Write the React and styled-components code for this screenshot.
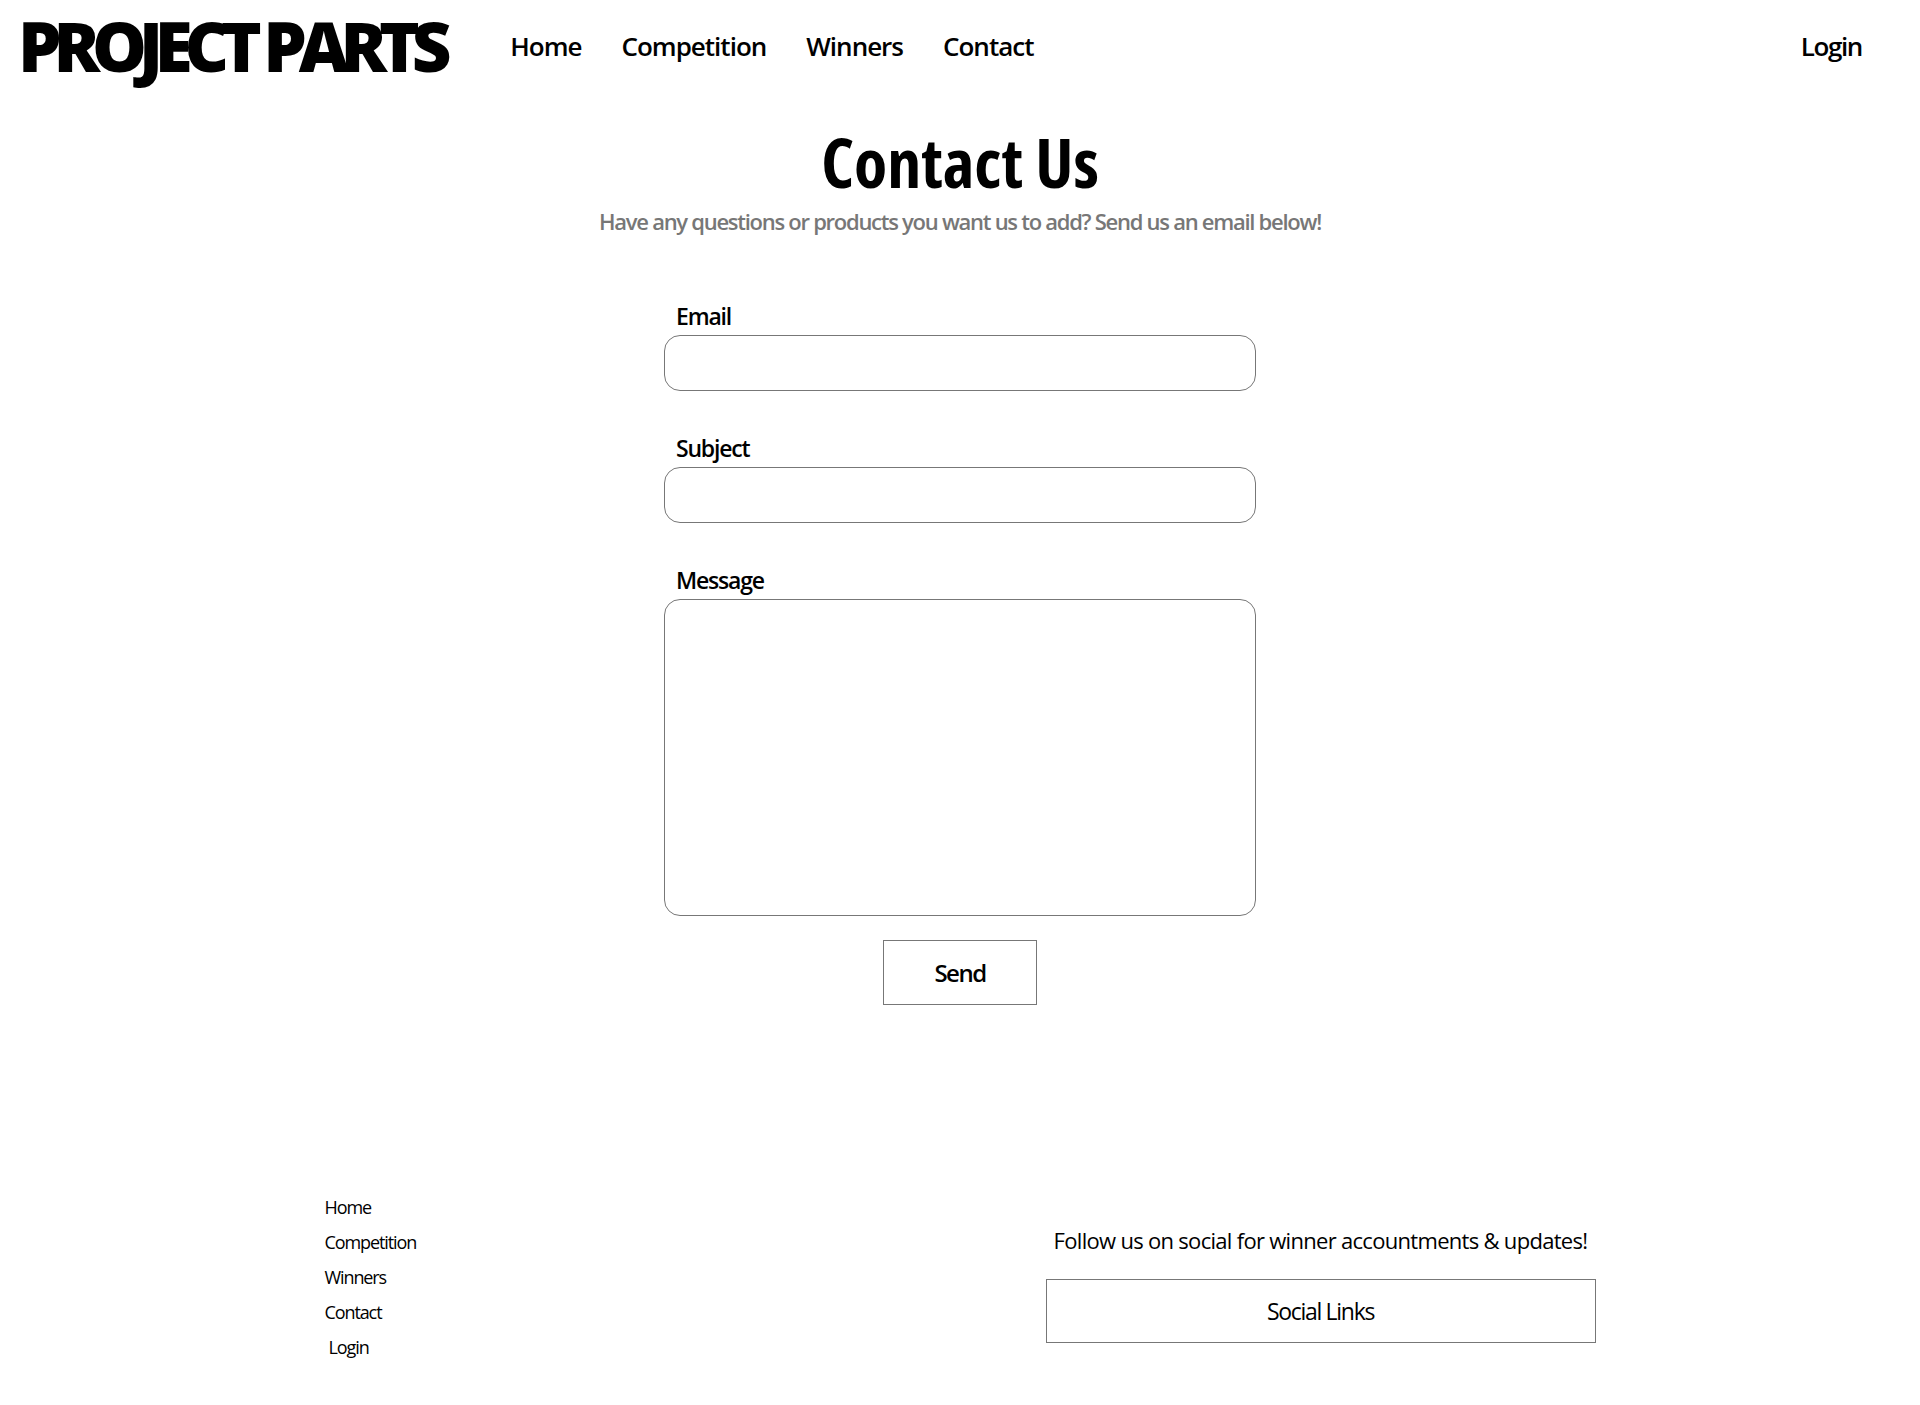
import React from 'react'
import styled, { createGlobalStyle } from 'styled-components'

const GlobalStyle = createGlobalStyle`
    body {
        margin: 0;
        background: #ffffff;
        font-family: "Open Sans", "Liberation Sans", sans-serif;
        color: #000000;
    }
`

const Header = styled.header`
    display: flex;
    align-items: center;
    height: 90px;
    padding: 0 58px 0 18px;
`

const Logo = styled.h1`
    margin: 0;
    font-size: 69px;
    font-weight: 800;
    letter-spacing: -8.2px;
    line-height: 1;
`

const Nav = styled.nav`
    display: flex;
    gap: 40px;
    margin-left: 67px;
    padding-top: 2px;
    flex: 1;
    a {
        font-size: 26px;
        font-weight: 600;
        color: #000;
        text-decoration: none;
        letter-spacing: -1px;
    }
`

const LoginLink = styled.a`
    font-size: 26px;
    font-weight: 600;
    color: #000;
    text-decoration: none;
    letter-spacing: -1.4px;
    padding-top: 2px;
`

const Main = styled.main`
    display: flex;
    flex-direction: column;
    align-items: center;
`

const Title = styled.h2`
    margin: 38px 0 0;
    font-size: 68px;
    font-weight: 700;
    font-stretch: 75%;
    letter-spacing: 0;
    line-height: 1;
`

const Subtitle = styled.p`
    margin: 8px 0 0;
    font-size: 22px;
    line-height: 34px;
    font-weight: 600;
    color: #777777;
    letter-spacing: -1.27px;
`

const Form = styled.form`
    width: 592px;
    margin-top: 65px;
    display: flex;
    flex-direction: column;
`

const Label = styled.label`
    font-size: 23px;
    font-weight: 600;
    letter-spacing: -1.2px;
    padding-left: 12px;
    line-height: 26px;
    margin-bottom: 6px;
    margin-top: ${p => (p.first ? '0' : '44px')};
`

const Input = styled.input`
    box-sizing: border-box;
    width: 100%;
    height: 56px;
    border: 1px solid #777777;
    border-radius: 16px;
    font-family: inherit;
`

const TextArea = styled.textarea`
    box-sizing: border-box;
    width: 100%;
    height: 317px;
    border: 1px solid #777777;
    border-radius: 16px;
    resize: none;
    font-family: inherit;
`

const SendButton = styled.button`
    align-self: center;
    margin-top: 24px;
    width: 154px;
    height: 65px;
    background: #ffffff;
    border: 1px solid #777777;
    font-family: inherit;
    font-size: 24px;
    font-weight: 600;
    letter-spacing: -1.5px;
`

const Footer = styled.footer`
    display: flex;
    justify-content: space-around;
    align-items: flex-start;
    margin-top: 190px;
`

const FooterLinks = styled.ul`
    list-style: none;
    margin: 0;
    padding: 0;
    width: 72px;
    display: flex;
    flex-direction: column;
    gap: 11px;
    li {
        font-size: 18px;
        font-weight: 500;
        letter-spacing: -1.1px;
        line-height: 24px;
        white-space: nowrap;
    }
`

const LoginItem = styled.li`
    padding-left: 4px;
`

const Social = styled.div`
    display: flex;
    flex-direction: column;
    align-items: center;
    width: 550px;
    padding-top: 28px;
`

const SocialText = styled.p`
    margin: 0;
    font-size: 22px;
    font-weight: 500;
    line-height: 34px;
    letter-spacing: -0.7px;
    white-space: nowrap;
`

const SocialBox = styled.div`
    box-sizing: border-box;
    width: 100%;
    height: 64px;
    margin-top: 22px;
    border: 1px solid #777777;
    display: flex;
    align-items: center;
    justify-content: center;
    font-size: 23px;
    font-weight: 500;
    letter-spacing: -1.3px;
`

export default function App() {
    return (
        <>
            <GlobalStyle />
            <Header>
                <Logo>PROJECT PARTS</Logo>
                <Nav>
                    <a href="#">Home</a>
                    <a href="#">Competition</a>
                    <a href="#">Winners</a>
                    <a href="#">Contact</a>
                </Nav>
                <LoginLink href="#">Login</LoginLink>
            </Header>
            <Main>
                <Title>Contact Us</Title>
                <Subtitle>Have any questions or products you want us to add? Send us an email below!</Subtitle>
                <Form onSubmit={e => e.preventDefault()}>
                    <Label first>Email</Label>
                    <Input type="email" />
                    <Label>Subject</Label>
                    <Input type="text" />
                    <Label>Message</Label>
                    <TextArea />
                    <SendButton type="submit">Send</SendButton>
                </Form>
            </Main>
            <Footer>
                <FooterLinks>
                    <li>Home</li>
                    <li>Competition</li>
                    <li>Winners</li>
                    <li>Contact</li>
                    <LoginItem>Login</LoginItem>
                </FooterLinks>
                <Social>
                    <SocialText>Follow us on social for winner accountments &amp; updates!</SocialText>
                    <SocialBox>Social Links</SocialBox>
                </Social>
            </Footer>
        </>
    )
}
